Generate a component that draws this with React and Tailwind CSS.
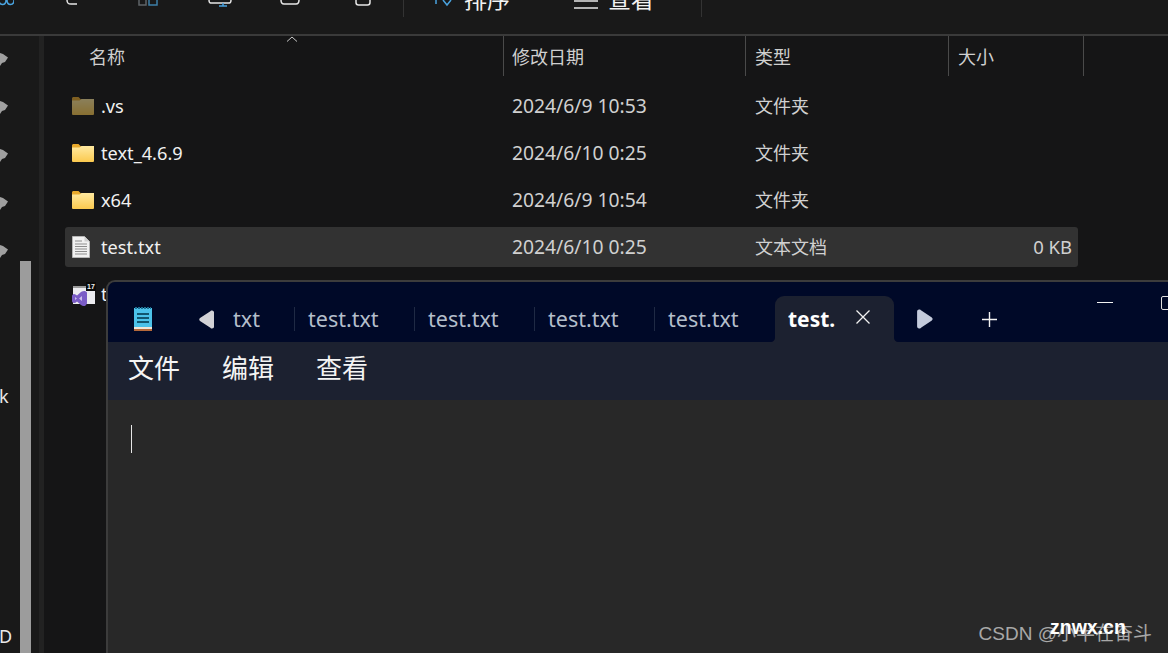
// Explorer file list with a Notepad window on top

import React from "react";

const rows = [
    { name: ".vs", date: "2024/6/9 10:53", type: "文件夹", icon: "dim" },
    { name: "text_4.6.9", date: "2024/6/10 0:25", type: "文件夹", icon: "folder" },
    { name: "x64", date: "2024/6/9 10:54", type: "文件夹", icon: "folder" },
    { name: "test.txt", date: "2024/6/10 0:25", type: "文本文档", size: "0 KB", icon: "txt", selected: true },
    { name: "test.sln", date: "2024/6/10 0:25", type: "Visual Studio", icon: "sln" },
];

function FolderIcon({ dim, id }) {
    return (
        <svg width="22" height="18" viewBox="0 0 22 18" className={dim ? "opacity-50" : ""}>
            <defs>
                <linearGradient id={id} x1="0" y1="0" x2="0" y2="1">
                    <stop offset="0" stopColor="#ffe9a0" />
                    <stop offset="1" stopColor="#fbc94e" />
                </linearGradient>
            </defs>
            <path d="M0 1.5C0 .7.7 0 1.5 0h5L9 2.5h13V8H0z" fill="#e8a92c" />
            <path d="M0 3.5h7.5L9.5 2H22v15a1 1 0 0 1-1 1H1a1 1 0 0 1-1-1z" fill={`url(#${id})`} />
        </svg>
    );
}

function TxtIcon() {
    return (
        <svg width="18" height="22" viewBox="0 0 18 22">
            <path d="M.5.5h12l5 5v16H.5z" fill="#f1f1f1" stroke="#b5b5b5" />
            <path d="M12.5.5v5h5z" fill="#cfcfcf" />
            <path d="M3 5h7M3 8h12M3 10.500h12M3 13h12M3 15.500h12M3 18h12" stroke="#8d8d8d" strokeWidth="1" />
        </svg>
    );
}

function SlnIcon() {
    return (
        <svg width="24" height="24" viewBox="0 0 24 24">
            <rect x="1" y="4" width="22" height="18" fill="#ececf0" />
            <rect x="1" y="4" width="22" height="2" fill="#9a9a9a" />
            <path d="M0 14c0-1 1-2 2-2s2 .5 3 1.500L9 10c1-1 3-1 4-1 1 .5 2 1 2 2v10c0 1-1 2-2 3-1 0-3 0-4-1l-4-3.500c-1 1-2 1.500-3 1.500s-2-1-2-2z" fill="#7a5cc6" />
            <path d="M3 15l2 1.500L3 18zM10 14v5l-3-2.500z" fill="#c9bdea" />
            <rect x="14" y="0" width="10" height="9" fill="#0a0a0a" />
            <text x="19" y="7" textAnchor="middle" fontSize="7" fontWeight="700" fill="#f0f0f0" fontFamily="Liberation Sans, sans-serif">17</text>
        </svg>
    );
}

function RowIcon({ kind, id }) {
    if (kind === "txt") return <TxtIcon />;
    if (kind === "sln") return <SlnIcon />;
    return <FolderIcon dim={kind === "dim"} id={id} />;
}

function Pin() {
    return (
        <svg width="8" height="16" viewBox="0 0 8 16" className="block">
            <path d="M0 2l3 1 5 3.500L5 11l-3 1-2 3z" fill="#a0a0a0" />
        </svg>
    );
}

function Tab() {
    return (
        <div className="w-[120px] flex items-center shrink-0">
            <span className="w-px h-6 bg-[#1f2a44]" />
            <span className="ml-[13px] mt-[1px] text-[21.5px] text-[#b4becb]">test.txt</span>
        </div>
    );
}

export default function App() {
    return (
        <div className="relative w-[1168px] h-[653px] overflow-hidden flex flex-col bg-[#191919] font-['Noto_Sans','Noto_Sans_CJK_SC',sans-serif]">
            {/* cut off command bar */}
            <div className="h-[36px] shrink-0 border-b-2 border-[#3a3a3a] flex items-start overflow-hidden">
                <svg width="14" height="6" viewBox="0 0 14 6" className="shrink-0">
                    <path d="M-1 0c0 6 7 6 7 0M7 0c0 6 7 6 7 0" fill="none" stroke="#4aa3df" strokeWidth="1.500" />
                </svg>
                <svg width="12" height="5" viewBox="0 0 12 5" className="ml-[52px] shrink-0">
                    <path d="M1 0c0 4 2 4 4 4h6" fill="none" stroke="#e6e6e6" strokeWidth="1.500" />
                </svg>
                <svg width="20" height="6" viewBox="0 0 20 6" className="ml-[60px] shrink-0">
                    <path d="M1 0v5h7V0" fill="none" stroke="#5f6468" strokeWidth="1.500" />
                    <path d="M11 0v5h8V0" fill="none" stroke="#3c7fa8" strokeWidth="1.500" />
                </svg>
                <svg width="24" height="7" viewBox="0 0 24 7" className="ml-[50px] shrink-0">
                    <path d="M1 0c0 3 1 3 3 3h16c2 0 3 0 3-3" fill="none" stroke="#e6e6e6" strokeWidth="1.500" />
                    <path d="M15 3v3M11 6h8" stroke="#4aa3df" strokeWidth="1.500" />
                </svg>
                <svg width="20" height="5" viewBox="0 0 20 5" className="ml-[48px] shrink-0">
                    <path d="M1 0c0 3 1 4 3 4h12c2 0 3-1 3-4" fill="none" stroke="#e6e6e6" strokeWidth="1.500" />
                </svg>
                <svg width="16" height="6" viewBox="0 0 16 6" className="ml-[55px] shrink-0">
                    <path d="M1 0v2.500C1 4 2 5 3.500 5h9C14 5 15 4 15 2.500V0" fill="none" stroke="#e6e6e6" strokeWidth="1.500" />
                </svg>
                <span className="ml-[32px] w-px h-[17px] bg-[#333] shrink-0" />
                <svg width="18" height="7" viewBox="0 0 18 7" className="ml-[31px] shrink-0">
                    <path d="M1 0v4M8 0l4 5 4-5" fill="none" stroke="#4aa3df" strokeWidth="1.500" />
                </svg>
                <span className="ml-[11px] -mt-[13px] text-[23px] leading-[24px] text-[#f2f2f2] shrink-0">排序</span>
                <svg width="24" height="9" viewBox="0 0 24 9" className="ml-[64px] shrink-0">
                    <path d="M0 1h24M0 8h24" stroke="#e6e6e6" strokeWidth="1.500" />
                </svg>
                <span className="ml-[10px] -mt-[13px] text-[23px] leading-[24px] text-[#f2f2f2] shrink-0">查看</span>
                <span className="ml-[47px] w-px h-[17px] bg-[#333] shrink-0" />
            </div>

            <div className="flex flex-1 min-h-0">
                {/* nav pane */}
                <div className="w-[39px] shrink-0 flex">
                    <div className="w-[20px] shrink-0 flex flex-col pt-[15px] overflow-hidden">
                        <div className="flex flex-col gap-[32px]">
                            <Pin />
                            <Pin />
                            <Pin />
                            <Pin />
                            <Pin />
                        </div>
                        <span className="mt-[125px] -ml-[1px] text-[18px] leading-[24px] text-[#e8e8e8]">k</span>
                        <span className="mt-[216px] -ml-[11px] text-[18px] leading-[24px] text-[#e8e8e8] whitespace-nowrap">SD</span>
                    </div>
                    <div className="w-[11px] shrink-0 mt-[225px] bg-[#9c9c9c]" />
                </div>
                <div className="w-[5px] shrink-0 bg-[#222222]" />

                {/* file list */}
                <div className="flex-1 min-w-0 bg-[#151516] flex flex-col relative">
                    <svg width="12" height="6" viewBox="0 0 12 6" className="absolute left-[242px] top-0">
                        <path d="M1 5.500L6 1l5 4.500" fill="none" stroke="#c8c8c8" strokeWidth="1" />
                    </svg>
                    <div className="h-[40px] shrink-0 flex text-[18px] text-[#cfcfcf]">
                        <div className="w-[459px] pl-[45px] pt-[2px] flex items-center">名称</div>
                        <div className="w-[242px] pl-[8px] pt-[2px] border-l border-[#4a4a4a] flex items-center">修改日期</div>
                        <div className="w-[203px] pl-[9px] pt-[2px] border-l border-[#4a4a4a] flex items-center">类型</div>
                        <div className="w-[136px] pl-[9px] pt-[2px] border-x border-[#4a4a4a] flex items-center">大小</div>
                    </div>
                    <div className="ml-[21px] w-[1013px] mt-[10px] flex flex-col gap-[7px]">
                        {rows.map((row, i) => (
                            <div
                                key={row.name}
                                className={`h-[40px] flex items-center rounded-[3px] ${row.selected ? "bg-[#323232]" : ""}`}
                            >
                                <div className="w-[447px] shrink-0 flex items-center">
                                    <div className="w-[36px] pl-[7px] shrink-0 flex justify-start">
                                        <RowIcon kind={row.icon} id={`folder-${i}`} />
                                    </div>
                                    <span className="mt-[1px] text-[18.2px] text-[#f0f0f0]">{row.name}</span>
                                </div>
                                <div className="w-[243px] shrink-0 text-[19.3px] text-[#d0d0d0]">{row.date}</div>
                                <div className="w-[203px] shrink-0 text-[18px] text-[#d0d0d0]">{row.type}</div>
                                <div className="flex-1 pr-[6px] text-right text-[18.5px] text-[#d0d0d0]">{row.size}</div>
                            </div>
                        ))}
                    </div>
                </div>
            </div>

            {/* notepad window */}
            <div className="absolute left-[106px] top-[280px] w-[1100px] h-[400px] flex flex-col bg-[#282828] border-l-2 border-t-2 border-[#3c3c3c] rounded-tl-[9px] overflow-hidden">
                <div className="h-[60px] shrink-0 flex pt-[14px] bg-[#000928]">
                    <div className="ml-[26px] w-[18px] shrink-0 flex items-center">
                        <svg width="18" height="24" viewBox="0 0 18 24">
                            <rect y="1" width="18" height="23" fill="#4cc2ea" />
                            <rect y="20" width="18" height="2" fill="#f0e6d8" />
                            <rect y="22" width="18" height="2" fill="#b5683a" />
                            <path d="M1 1h16" stroke="#1d6f92" strokeWidth="2" strokeDasharray="2 1" />
                            <path d="M3 7h12M3 11h12M3 15h12" stroke="#12566f" strokeWidth="2" />
                        </svg>
                    </div>
                    <div className="ml-[47px] w-[15px] shrink-0 flex items-center">
                        <svg width="15" height="19" viewBox="0 0 15 19">
                            <path d="M13 .5c1.500 0 2 1 2 2v14c0 1-.5 2-2 2-1 0-1.500-.5-2-1L1 11C0 10 0 9 1 8l10-6.500c.5-.5 1-1 2-1z" fill="#d2d2d6" />
                        </svg>
                    </div>
                    <div className="w-[80px] pl-[19px] pt-[1px] shrink-0 flex items-center text-[21.500px] text-[#b4becb]">txt</div>
                    <Tab />
                    <Tab />
                    <Tab />
                    <Tab />
                    <div className="relative ml-px w-[119px] shrink-0 bg-[#1c2130] rounded-t-[9px] flex items-center pl-[13px]">
                        <svg width="4" height="4" viewBox="0 0 4 4" className="absolute -left-[4px] bottom-0">
                            <path d="M4 0v4H0c2 0 4-2 4-4z" fill="#1c2130" />
                        </svg>
                        <span className="mt-[1px] text-[21px] font-bold text-white">test.</span>
                        <svg width="14" height="14" viewBox="0 0 14 14" className="absolute left-[81px] top-[14px]">
                            <path d="M.5.500l13 13M13.500.500l-13 13" stroke="#f2f2f2" strokeWidth="1.300" />
                        </svg>
                        <svg width="4" height="4" viewBox="0 0 4 4" className="absolute -right-[4px] bottom-0">
                            <path d="M0 0v4h4C2 4 0 2 0 0z" fill="#1c2130" />
                        </svg>
                    </div>
                    <div className="ml-[23px] w-[16px] shrink-0 flex items-center">
                        <svg width="16" height="20" viewBox="0 0 15 19">
                            <path d="M2 .5C.5.500 0 1.500 0 2.500v14c0 1 .5 2 2 2 1 0 1.500-.5 2-1L14 11c1-1 1-2 0-3L4 1.500c-.5-.5-1-1-2-1z" fill="#c4cbdc" />
                        </svg>
                    </div>
                    <div className="ml-[49px] w-[15px] shrink-0 flex items-center">
                        <svg width="15" height="15" viewBox="0 0 15 15">
                            <path d="M7.500 0v15M0 7.500h15" stroke="#f2f2f2" strokeWidth="1.400" />
                        </svg>
                    </div>
                    <span className="ml-[100px] mt-[6px] self-start w-[16px] h-px bg-[#f2f2f2] shrink-0" />
                    <span className="ml-[48px] mt-[0px] self-start w-[14px] h-[14px] border border-[#e0e0e0] rounded-[2px] shrink-0" />
                </div>
                <div className="h-[58px] shrink-0 bg-[#1c2130] flex items-center pl-[20px] pb-[6px] gap-[42px] text-[26px] text-[#f4f4f4]">
                    <span>文件</span>
                    <span>编辑</span>
                    <span>查看</span>
                </div>
                <div className="flex-1 pl-[23px] pt-[25px]">
                    <div className="w-px h-[28px] bg-[#e6e6e6]" />
                </div>
            </div>

            {/* watermark */}
            <span className="absolute right-[16px] top-[622px] text-[19px] leading-[24px] text-[#a8a8a8] font-['Liberation_Sans','Noto_Sans_CJK_SC',sans-serif]">CSDN @小半在奋斗</span>
            <span className="absolute left-[1050px] top-[614px] text-[19.5px] leading-[26px] font-bold text-white font-['Liberation_Sans',sans-serif]">znwx.cn</span>
        </div>
    );
}
